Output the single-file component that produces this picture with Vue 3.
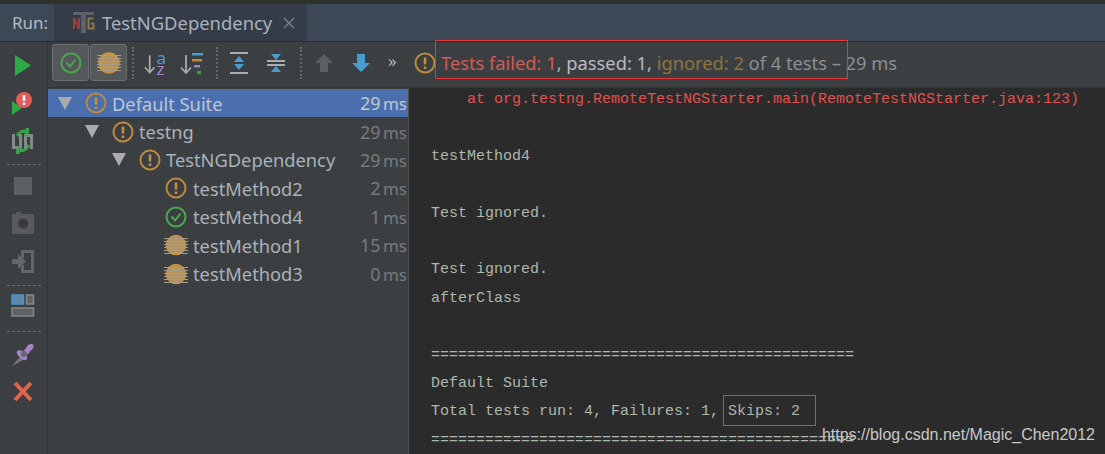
<script setup>
const tree = [
  { name: 'Default Suite', time: '29', icon: 'warn', indent: 0, arrow: true, selected: true },
  { name: 'testng', time: '29', icon: 'warn', indent: 1, arrow: true },
  { name: 'TestNGDependency', time: '29', icon: 'warn', indent: 2, arrow: true },
  { name: 'testMethod2', time: '2', icon: 'warn', indent: 3 },
  { name: 'testMethod4', time: '1', icon: 'ok', indent: 3 },
  { name: 'testMethod1', time: '15', icon: 'skip', indent: 3 },
  { name: 'testMethod3', time: '0', icon: 'skip', indent: 3 },
]
const lines = [
  { t: '    at org.testng.RemoteTestNGStarter.main(RemoteTestNGStarter.java:123)', err: true },
  { t: '' }, { t: 'testMethod4' }, { t: '' }, { t: 'Test ignored.' }, { t: '' },
  { t: 'Test ignored.' }, { t: 'afterClass' }, { t: '' },
  { t: '='.repeat(47) }, { t: 'Default Suite' },
  { t: 'Total tests run: 4, Failures: 1, ', skips: 'Skips: 2' },
  { t: '='.repeat(47) },
]
const stripes = [3, 6, 9, 12, 15, 18]
</script>

<template>
  <div class="app">
    <div class="topline"></div>
    <div class="tabbar">
      <span class="run">Run:</span>
      <div class="tab">
        <svg class="nglogo" width="22" height="22" viewBox="0 0 22 22">
          <path d="M0 0H21V3H13V21H8V3H0Z" fill="#5e6166" />
          <path d="M1 17V6L6 17V6" fill="none" stroke="#96423f" stroke-width="2" />
          <path d="M20.500 6.500H15.500V16.500H20.500V11.500H18" fill="none" stroke="#8c7a45" stroke-width="2" />
        </svg>
        <span class="tabname">TestNGDependency</span>
        <svg class="tabclose" width="12" height="12" viewBox="0 0 12 12">
          <path d="M1 1L11 11M11 1L1 11" stroke="#777c83" stroke-width="1.500" />
        </svg>
      </div>
    </div>
    <div class="body">
      <aside class="side">
        <svg class="si" width="24" height="24" viewBox="0 0 24 24"><path d="M4 2L20 12.500L4 23Z" fill="#2fa84a" /></svg>
        <svg class="si" width="24" height="24" viewBox="0 0 24 24">
          <path d="M1 10L11 17L1 24Z" fill="#2fa84a" />
          <circle cx="13" cy="9" r="8" fill="#e25b57" />
          <path d="M13 4V10" stroke="#fff" stroke-width="2.500" /><path d="M13 11.500V14" stroke="#fff" stroke-width="2.500" />
        </svg>
        <svg class="si rerun" width="24" height="26" viewBox="0 0 24 26">
          <path d="M1 6H4V18H8V6H11V21H1Z M13 21V6H22V21H19V9H16V21Z" fill="#85888a" />
          <path d="M5 7C7 3 11 1 15 2L14 0H18V5L13 9L14 5C11 4.500 9 5.500 8 7L9 10Z" fill="#36a64a" />
          <path d="M19 18C17 22 13 25 8 24L9 26H5V21L10 17L9 21C12 21.500 15 20.500 16 18L15 15Z" fill="#36a64a" />
        </svg>
        <div class="dots"></div>
        <div class="stop"></div>
        <svg class="si" width="24" height="24" viewBox="0 0 24 24">
          <path d="M1 3H5V1H10V3H23V23H1Z" fill="#58595b" />
          <circle cx="12" cy="12.500" r="7" fill="#4a4c4e" stroke="#6a6c6e" stroke-width="1" /><circle cx="12" cy="12.500" r="4" fill="#36393c" />
        </svg>
        <svg class="si" width="24" height="24" viewBox="0 0 24 24">
          <path d="M10 1H23V24H10V16H13V21H20V4H13V9H10Z" fill="#636668" />
          <path d="M1 10H7V5L15 12.500L7 20V15H1Z" fill="#636668" />
        </svg>
        <div class="dots short"></div>
        <svg class="si" width="24" height="24" viewBox="0 0 24 24">
          <rect x="1" y="1" width="11.500" height="9" fill="#5b87ab" stroke="#4a95c9" stroke-width="1.500" />
          <rect x="15.500" y="1" width="7" height="9" fill="#5f6264" stroke="#868889" stroke-width="1.500" />
          <rect x="1" y="14" width="21.500" height="8" fill="#5f6264" stroke="#868889" stroke-width="1.500" />
        </svg>
        <div class="dots tight"></div>
        <svg class="si pin" width="24" height="24" viewBox="0 0 24 24">
          <path d="M1 24L9 15L12 18Z" fill="#77797b" />
          <path d="M6 9C9 7 12 9 14 11C16 14 17 16 15 18C12 19 9 16 7.500 14C6 12 5 10.500 6 9Z" fill="#a682c8" />
          <ellipse cx="18.500" cy="6" rx="5" ry="3" fill="#a682c8" transform="rotate(-42 18.500 6)" />
          <path d="M13 8L17 6L19 10L15 14Z" fill="#a682c8" />
          <circle cx="13" cy="12" r="3" fill="#67696b" />
        </svg>
        <svg class="si" width="24" height="24" viewBox="0 0 24 24"><path d="M4 4L20 21M20 4L4 21" stroke="#e0624f" stroke-width="4" /></svg>
      </aside>
      <div class="main">
        <div class="toolbar">
          <button class="tbtn">
            <svg width="24" height="24" viewBox="0 0 24 24">
              <circle cx="12" cy="12" r="9.500" fill="none" stroke="#4ca54f" stroke-width="2" />
              <path d="M7.500 11.500L11 15.500L16.500 8.500" fill="none" stroke="#4ca54f" stroke-width="2" />
            </svg>
          </button>
          <button class="tbtn">
            <svg width="26" height="24" viewBox="0 0 26 24">
              <circle cx="13" cy="12" r="10" fill="#b5935a" stroke="#d08f35" stroke-width="1.500" />
              <path v-for="y in [4, 7, 10, 13, 16, 19]" :key="y" :d="`M1 ${y + 0.5}H25`" stroke="#a89c88" stroke-width="1" />
            </svg>
          </button>
          <div class="vdots"></div>
          <div class="azicon">
            <svg width="12" height="24" viewBox="0 0 12 24">
              <path d="M6 4V21.500M1 16.500L6 22L11 16.500" fill="none" stroke="#a9abad" stroke-width="1.800" />
            </svg>
            <div class="azletters"><span class="blue">a</span><span class="purple">z</span></div>
          </div>
          <svg class="ti sort" width="23" height="24" viewBox="0 0 23 24">
            <path d="M6 4V21.500M1 16.500L6 22L11 16.500" fill="none" stroke="#a9abad" stroke-width="1.800" />
            <path d="M12 2H23V4.500H12Z" fill="#4a9bd0" /><path d="M12 8H22V10.500H12Z" fill="#c58b3d" />
            <path d="M14 14H20V16.500H14Z" fill="#a682c8" /><path d="M17 20H21V23H17Z" fill="#2fa84a" />
          </svg>
          <div class="vdots"></div>
          <svg class="ti exp" width="22" height="24" viewBox="0 0 22 24">
            <path d="M2 2H20M2 22H20" stroke="#a9abad" stroke-width="2" />
            <path d="M11 5L16 11H6Z M11 19L6 13H16Z" fill="#4a9bd0" />
          </svg>
          <svg class="ti col" width="22" height="24" viewBox="0 0 22 24">
            <path d="M2 10H20M2 14H20" stroke="#a9abad" stroke-width="2" />
            <path d="M11 9L6 3H16Z M11 15L16 21H6Z" fill="#4a9bd0" />
          </svg>
          <div class="vdots"></div>
          <svg class="ti up" width="20" height="20" viewBox="0 0 20 20"><path d="M10 1L19 10H14V19H6V10H1Z" fill="#5d5f61" /></svg>
          <svg class="ti down" width="20" height="20" viewBox="0 0 20 20"><path d="M6 1H14V10H19L10 19L1 10H6Z" fill="#4a9bd0" /></svg>
          <span class="more">»</span>
          <svg class="statusicon" width="22" height="22" viewBox="0 0 22 22">
            <circle cx="11" cy="11" r="9.500" fill="none" stroke="#b98a3f" stroke-width="2" />
            <path d="M11 5.500V12.500" stroke="#c4923f" stroke-width="2.500" /><path d="M11 14.500V17" stroke="#c4923f" stroke-width="2.500" />
          </svg>
          <span class="status">
            <span class="red">Tests failed: 1</span><span class="lt">, passed: 1, </span><span class="brown">ignored: 2</span><span class="gr"> of 4 tests – 29 ms</span>
          </span>
          <div class="redbox"></div>
        </div>
        <div class="panes">
          <div class="tree">
            <div v-for="r in tree" :key="r.name" class="row" :class="{ sel: r.selected }">
              <div class="rowleft" :class="`ind${r.indent}`">
                <svg v-if="r.arrow" class="arrow" width="16" height="13" viewBox="0 0 16 13"><path d="M1 0H15L8 13Z" fill="#a9abae" /></svg>
                <svg v-if="r.icon === 'warn'" class="ic" width="22" height="22" viewBox="0 0 22 22">
                  <circle cx="11" cy="11" r="9.500" fill="none" stroke="#b98a3f" stroke-width="2" />
                  <path d="M11 5.500V12.500" stroke="#c4923f" stroke-width="2.500" /><path d="M11 14.500V17" stroke="#c4923f" stroke-width="2.500" />
                </svg>
                <svg v-else-if="r.icon === 'ok'" class="ic" width="22" height="22" viewBox="0 0 22 22">
                  <circle cx="11" cy="11" r="9.500" fill="none" stroke="#4ca54f" stroke-width="2" />
                  <path d="M6.500 10.500L10 14.500L15.500 7.500" fill="none" stroke="#4ca54f" stroke-width="2" />
                </svg>
                <svg v-else class="ic skip" width="24" height="22" viewBox="0 0 24 22">
                  <circle cx="12" cy="11" r="9.500" fill="#b5935a" stroke="#cc8f38" stroke-width="1.500" />
                  <path v-for="y in stripes" :key="y" :d="`M0 ${y + 1.5}H24`" stroke="#a89c88" stroke-width="1" />
                </svg>
                <span class="name">{{ r.name }}</span>
              </div>
              <span class="time"><b>{{ r.time }}</b> ms</span>
            </div>
          </div>
          <div class="console">
            <div v-for="(l, i) in lines" :key="i" class="cline" :class="{ err: l.err }">{{ l.t }}<span v-if="l.skips" class="skips">{{ l.skips }}</span></div>
          </div>
        </div>
      </div>
    </div>
    <div class="mark">https://blog.csdn.net/Magic_Chen2012</div>
  </div>
</template>

<style>
html, body { margin: 0; background: #2b2b2b; overflow: hidden; }
</style>

<style scoped>
.app { position: relative; width: 1105px; height: 454px; overflow: hidden; background: #3c3f41; font-family: "Noto Sans", sans-serif; }
.topline { height: 4px; background: #2e322d; }
.tabbar { height: 37px; background: #3d4857; border-bottom: 1px solid #2b2d2f; display: flex; align-items: stretch; }
.run { width: 54px; padding-left: 12px; box-sizing: border-box; color: #b5bac0; font-size: 17px; line-height: 37px; }
.tab { width: 253px; background: #333c48; display: flex; align-items: center; padding-left: 19px; box-sizing: border-box; }
.nglogo { flex: none; margin-right: 7px; }
.tabname { color: #a9b2bb; font-size: 18.400px; }
.tabclose { margin-left: 11px; flex: none; }
.body { display: flex; height: 412px; }
.side { width: 47px; border-right: 1px solid #323435; display: flex; flex-direction: column; align-items: center; padding-top: 11px; box-sizing: content-box; }
.si { flex: none; margin-bottom: 14px; margin-left: -1px; }
.si.rerun { margin: -1px 0 12px -1px; }
.si.pin { margin-bottom: 13px; }
.dots { width: 34px; border-top: 1px dashed #6a6d70; margin: -2px 0 12px; }
.dots.short { margin-bottom: 8px; }
.dots.tight { margin: -1px 0 10px; }
.stop { width: 18px; height: 18px; background: #5d6062; margin: 0 0 16px -1px; }
.main { flex: 1; display: flex; flex-direction: column; min-width: 0; }
.toolbar { position: relative; height: 46px; box-sizing: border-box; display: flex; align-items: center; padding: 0 0 4px 4px; background: #3c3f41; border-bottom: 1px solid #333537; }
.tbtn { width: 37px; height: 37px; margin-right: 1px; padding: 0; display: flex; align-items: center; justify-content: center; background: #55585a; border: 1px solid #6c6f71; border-radius: 3px; flex: none; }
.vdots { width: 0; height: 32px; border-left: 2px dotted #65686a; margin: 0 10px 0 4px; flex: none; }
.azicon { display: flex; align-items: center; width: 22px; height: 24px; margin-right: 14px; flex: none; }
.azletters { display: flex; flex-direction: column; font-size: 17px; line-height: 11px; margin-left: 1px; }
.blue { color: #4a9bd0; }
.purple { color: #a57fc4; }
.ti { flex: none; }
.ti.sort, .ti.col { margin-right: 9px; }
.ti.exp { margin-right: 15px; }
.ti.up { margin: 0 17px 0 2px; }
.ti.down { margin-right: 17px; }
.more { width: 10px; color: #b5b8ba; font-size: 17px; margin: -4px 16px 0 0; line-height: 1; flex: none; }
.statusicon { flex: none; margin-right: 5px; }
.status { font-size: 18.300px; white-space: pre; }
.red { color: #d15a54; }
.lt { color: #b5bcc2; }
.brown { color: #8f7440; }
.gr { color: #8b8f92; }
.redbox { position: absolute; left: 387px; top: -2px; width: 413px; height: 39px; border: 1px solid #e8363a; box-sizing: border-box; }
.panes { flex: 1; display: flex; min-height: 0; }
.tree { width: 361px; flex: none; box-sizing: border-box; padding-top: 1px; border-right: 1px solid #505254; background: #3c3f41; }
.row { height: 28.400px; display: flex; align-items: center; justify-content: space-between; color: #a9b2bb; font-size: 18.300px; }
.row.sel { background: #4b6eaf; color: #bcc6d2; }
.rowleft { display: flex; align-items: center; }
.ind0 { padding-left: 9px; }
.ind1 { padding-left: 36px; }
.ind2 { padding-left: 63px; }
.ind3 { padding-left: 117px; }
.ind3 .name { margin-left: 6px; }
.arrow { margin-right: 12px; flex: none; }
.ic { flex: none; }
.ic.skip { margin: 0 -1px; }
.name { margin-left: 5px; white-space: pre; }
.time { color: #777b7e; font-size: 17px; margin-right: 1px; white-space: pre; word-spacing: -2px; }
.time b { font-weight: 400; font-size: 18px; }
.sel .time { color: #c0c8d2; }
.console { flex: 1; min-width: 0; background: #2b2b2b; padding: 0 0 0 22px; font-family: "Liberation Mono", monospace; font-size: 15px; color: #adb8ac; overflow: hidden; }
.cline { height: 28.400px; line-height: 28.400px; white-space: pre; }
.cline.err { color: #e0514e; margin-top: -2px; }
.skips { position: relative; display: inline-block; }
.skips::after { content: ""; position: absolute; left: -5px; right: -16px; top: -3px; height: 31px; box-sizing: border-box; border: 1px solid #e23f3f; }
.mark { position: absolute; right: 10px; top: 426px; color: #c8c8c8; font: 16px "Liberation Sans", sans-serif; }
</style>
